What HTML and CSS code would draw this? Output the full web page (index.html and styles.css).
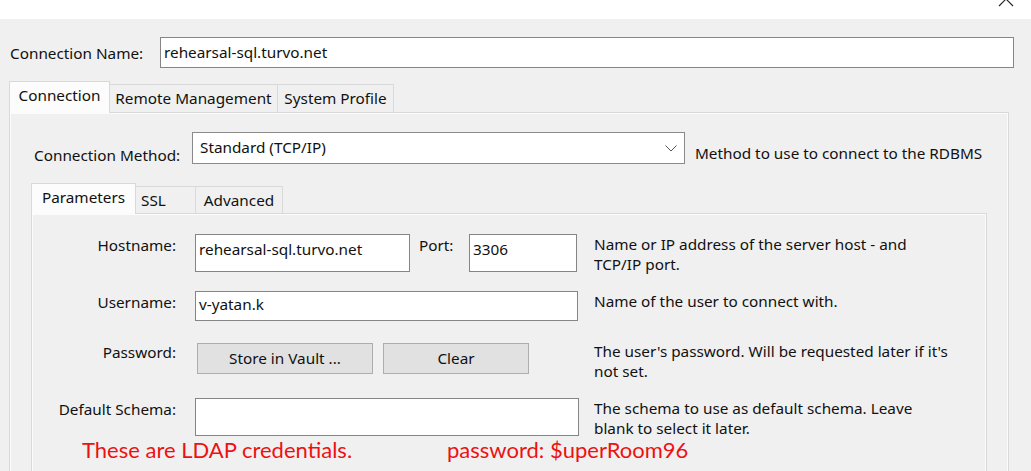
FILE: index.html
```html
<!DOCTYPE html>
<html lang="en">
<head>
<meta charset="utf-8">
<title>Connection</title>
<link rel="stylesheet" href="styles.css">
</head>
<body>
<div class="titlebar">
  <svg class="close" width="20" height="8" viewBox="0 0 20 8" aria-hidden="true">
    <path d="M1 6 L13 -6 M15 6 L3 -6" stroke="#222" stroke-width="1.1" fill="none"/>
  </svg>
</div>
<div class="dialog">
  <div class="name-row">
    <span class="name-label">Connection Name:</span>
    <div class="field name-field">rehearsal-sql.turvo.net</div>
  </div>

  <div class="outer-tabs">
    <div class="tabstrip">
      <div class="tab tab-active tab-conn">Connection</div>
      <div class="tab tab-remote">Remote Management</div>
      <div class="tab tab-system">System Profile</div>
    </div>
    <div class="panel outer-panel">
      <div class="method-row">
        <span class="method-label">Connection Method:</span>
        <div class="select">
          <span>Standard (TCP/IP)</span>
          <svg class="chevron" width="12" height="7" viewBox="0 0 12 7" aria-hidden="true">
            <path d="M0.5 0.5 L6 6 L11.5 0.5" stroke="#555" stroke-width="1" fill="none"/>
          </svg>
        </div>
        <span class="method-help">Method to use to connect to the RDBMS</span>
      </div>

      <div class="inner-tabs">
        <div class="tabstrip inner-strip">
          <div class="tab tab-active tab-params">Parameters</div>
          <div class="tab tab-ssl">SSL</div>
          <div class="tab tab-adv">Advanced</div>
        </div>
        <div class="panel inner-panel">
          <div class="params">
            <div class="plabel">Hostname:</div>
            <div class="pfield host-row">
              <div class="field host-field">rehearsal-sql.turvo.net</div>
              <span class="port-label">Port:</span>
              <div class="field port-field">3306</div>
            </div>
            <div class="phelp">Name or IP address of the server host - and<br>TCP/IP port.</div>

            <div class="plabel">Username:</div>
            <div class="pfield">
              <div class="field user-field">v-yatan.k</div>
            </div>
            <div class="phelp">Name of the user to connect with.</div>

            <div class="plabel">Password:</div>
            <div class="pfield btn-row">
              <div class="btn btn-store">Store in Vault ...</div>
              <div class="btn btn-clear">Clear</div>
            </div>
            <div class="phelp">The user's password. Will be requested later if it's<br>not set.</div>

            <div class="plabel">Default Schema:</div>
            <div class="pfield">
              <div class="field schema-field"></div>
            </div>
            <div class="phelp">The schema to use as default schema. Leave<br>blank to select it later.</div>
          </div>
          <div class="note">
            <span class="note-a">These are LDAP credentials.</span>
            <span class="note-b">password: $uperRoom96</span>
          </div>
        </div>
      </div>
    </div>
  </div>
</div>
</body>
</html>
```

FILE: styles.css
```css
html, body {
  margin: 0;
  padding: 0;
}
body {
  background: #f0f0f0;
  font-family: "Noto Sans", "Open Sans", sans-serif;
  font-size: 15.3px;
  color: #111;
  width: 1031px;
  height: 471px;
  overflow: hidden;
}
.titlebar {
  height: 19px;
  background: #ffffff;
  position: relative;
}
.close {
  position: absolute;
  left: 998px;
  top: 0;
}
.dialog {
  padding: 18px 0 0 0;
}
.name-row {
  display: flex;
  align-items: center;
  padding-left: 10px;
}
.name-label {
  width: 150px;
  line-height: 20px;
}
.field {
  box-sizing: border-box;
  flex-shrink: 0;
  background: #fff;
  border: 1px solid #858585;
  line-height: 20px;
  padding: 2px 3px;
  white-space: nowrap;
}
.name-field {
  width: 854px;
  height: 31px;
  padding-top: 4px;
}

/* tabs */
.outer-tabs {
  margin: 13px 0 0 9px;
  width: 1000px;
}
.tabstrip {
  display: flex;
  align-items: flex-end;
  height: 31px;
}
.tab {
  box-sizing: border-box;
  flex-shrink: 0;
  height: 28px;
  border: 1px solid #d9d9d9;
  border-bottom: none;
  background: #f0f0f0;
  line-height: 26px;
  text-align: center;
  white-space: nowrap;
}
.tab-active {
  height: 32px;
  margin-bottom: -1px;
  background: #fcfcfc;
  position: relative;
  z-index: 1;
  line-height: 27px;
}
.tab + .tab { border-left: none; }
.tab-conn { width: 101px; }
.tab-remote { width: 168px; }
.tab-system { width: 116px; }

.panel {
  box-sizing: border-box;
  border: 1px solid #d9d9d9;
  background: #f0f0f0;
  box-shadow: inset 0 0 0 1px #fbfbfb;
}
.outer-panel {
  height: 400px;
  padding: 19px 0 0 24px;
}

.method-row {
  display: flex;
  align-items: flex-start;
  height: 32px;
}
.method-label {
  width: 158px;
  margin-top: 13px;
  line-height: 20px;
}
.select {
  box-sizing: border-box;
  width: 493px;
  height: 32px;
  background: #fff;
  border: 1px solid #8a8a8a;
  display: flex;
  align-items: center;
  justify-content: space-between;
  padding: 0 7px 2px 7px;
  line-height: 20px;
}
.chevron {
  margin-top: 2px;
}
.method-help {
  margin: 11px 0 0 10px;
  line-height: 20px;
  white-space: nowrap;
}

.inner-tabs {
  margin: 19px 0 0 -3px;
  width: 956px;
}
.inner-strip {
  height: 30px;
}
.inner-strip .tab { height: 27px; line-height: 26px; }
.inner-strip .tab-active { height: 31px; line-height: 27px; }
.tab-params { width: 105px; }
.tab-ssl { width: 60px; text-align: left; padding-left: 5px; }
.tab-adv { width: 87px; }

.inner-panel {
  height: 300px;
  padding-top: 20px;
}
.params {
  display: grid;
  grid-template-columns: 144px 402px auto;
  grid-template-rows: 57px 50px 57px 38px;
}
.plabel {
  text-align: right;
  line-height: 20px;
  padding-top: 1px;
  white-space: nowrap;
}
.pfield {
  padding-left: 19px;
  display: flex;
  align-items: flex-start;
}
.phelp {
  margin-left: 16px;
  line-height: 20px;
  white-space: nowrap;
}
.host-field {
  width: 215px;
  height: 38px;
  padding-top: 4px;
}
.port-label {
  flex-shrink: 0;
  width: 50px;
  margin-left: 9px;
  line-height: 20px;
  padding-top: 1px;
}
.port-field {
  width: 108px;
  height: 38px;
  padding-top: 4px;
}
.user-field {
  width: 383px;
  height: 30px;
}
.schema-field {
  width: 384px;
  height: 38px;
}
.btn-row {
  gap: 10px;
  padding-top: 2px;
  padding-left: 21px;
}
.btn {
  box-sizing: border-box;
  flex-shrink: 0;
  height: 31px;
  background: #e1e1e1;
  border: 1px solid #adadad;
  text-align: center;
  line-height: 28px;
  white-space: nowrap;
}
.btn-store { width: 176px; }
.btn-clear { width: 146px; }

.note {
  display: flex;
  font-family: "Lato", "Open Sans", sans-serif;
  font-size: 22px;
  line-height: 28px;
  color: #ee1111;
  padding-left: 50px;
}
.note-a { width: 365px; }
```
